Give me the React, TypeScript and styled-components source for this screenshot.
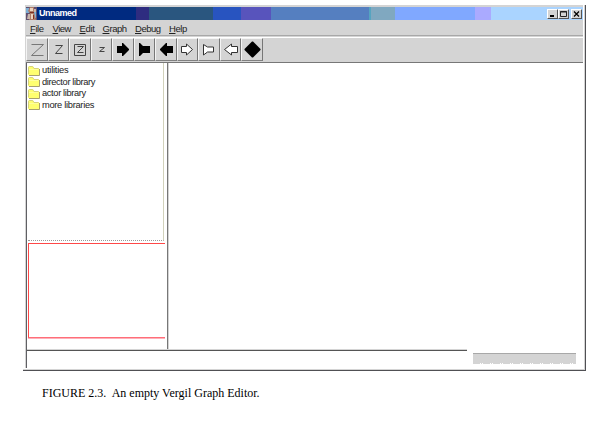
import React from "react";
import styled, { createGlobalStyle } from "styled-components";

const Global = createGlobalStyle`
  * { box-sizing: border-box; }
  body { margin: 0; background: #fff; color: #000; font-family: "Liberation Sans", Arial, sans-serif; }
`;

const Page = styled.div`
  width: 600px;
  height: 422px;
  padding: 5px 0 0 23px;
  overflow: hidden;
`;

const Window = styled.div`
  width: 563px;
  height: 366px;
  display: flex;
  flex-direction: column;
  padding-left: 2px;
  border-right: 1px solid #505054;
  border-bottom: 1px solid #505054;
  box-shadow: inset -1px -1px #d4d4d4;
`;

const Frame = styled.div`
  display: flex;
  flex-direction: column;
  width: 558px;
  height: 58px;
  background: #d4d4d4;
  padding: 1px 0 0 1px;
`;

const TitleBar = styled.header`
  display: flex;
  align-items: center;
  flex: none;
  height: 13px;
  margin-top: 1px;
  background: linear-gradient(
    90deg,
    #002a80 0 110px,
    #2e2c80 110px 123px,
    #2a567f 123px 187px,
    #2854c0 187px 215px,
    #5854bc 215px 245px,
    #557fc0 245px 343px,
    #55a4c0 343px 345px,
    #80a8c0 345px 369px,
    #80a8ff 369px 449px,
    #aaaaff 449px 465px,
    #aad4ff 465px
  );
`;

const Title = styled.h1`
  flex: 1;
  margin: 0 0 0 2px;
  color: #fff;
  font-size: 9px;
  line-height: 13px;
  letter-spacing: -0.5px;
`;

const WindowButtons = styled.div`
  display: flex;
  margin-right: 1px;
`;

const WindowButton = styled.span<{ $gap?: boolean }>`
  width: 11px;
  height: 10px;
  margin-left: ${(p) => (p.$gap ? 2 : 0)}px;
  background: #d4d4d4;
  border: 1px solid;
  border-color: #fff #555 #555 #fff;
  svg { display: block; }
`;

const MenuBar = styled.nav`
  display: flex;
  flex: none;
  height: 16px;
  padding-left: 4px;
  border-bottom: 1px solid #a8a8a8;
  font-size: 9.5px;
  line-height: 17px;
  color: #222;
`;

const MenuItem = styled.span<{ $width: number; $spacing: number }>`
  width: ${(p) => p.$width}px;
  letter-spacing: ${(p) => p.$spacing}px;
  white-space: nowrap;
  u { text-underline-offset: 1px; text-decoration-thickness: 1px; }
`;

const Toolbar = styled.div`
  display: flex;
  flex: none;
  height: 26px;
  margin-top: 1px;
  border-top: 1px solid #fff;
  border-bottom: 1px solid #777;
`;

const ToolButton = styled.span`
  display: flex;
  width: 21.55px;
  height: 23px;
  align-items: center;
  justify-content: center;
  border: 1px solid;
  border-color: #f4f4f4 #777 #808080 #f4f4f4;
`;

const Body = styled.main`
  display: flex;
  height: 287px;
`;

const Sidebar = styled.aside`
  width: 141px;
  padding-left: 1px;
  border-left: 1px solid #606064;
  margin-left: 1px;
  box-shadow: -1px 0 #d4d4d4;
`;

const Tree = styled.ul`
  width: 136px;
  height: 178px;
  margin: 0;
  padding: 2px 0 0;
  list-style: none;
  border-right: 1px solid #d2d2bc;
  border-bottom: 1px dotted #999;
`;

const TreeItem = styled.li<{ $spacing: number }>`
  display: flex;
  align-items: center;
  height: 11.5px;
  gap: 2px;
  font-size: 9.3px;
  line-height: 11px;
  letter-spacing: ${(p) => p.$spacing}px;
  white-space: nowrap;
  color: #222;
  svg { flex: none; }
`;

const Overview = styled.div`
  width: 137px;
  height: 95px;
  margin-top: 2px;
  border: 1px solid #ff4848;
  border-right: 0;
  border-bottom-color: #ff6e78;
  box-shadow: 0 1px #ffb0ba;
`;

const Canvas = styled.section`
  flex: 1;
  border-left: 1px solid #777;
  box-shadow: inset 1px 0 #d4d4d4;
  margin-right: 2px;
`;

const Status = styled.footer`
  display: flex;
  height: 18px;
  margin-left: 1px;
  border-left: 1px solid #606064;
  box-shadow: -1px 0 #d4d4d4;
`;

const Message = styled.div`
  width: 440px;
  height: 2px;
  border-top: 1px solid #555;
  box-shadow: 0 -1px #d4d4d4;
`;

const Progress = styled.div`
  width: 103px;
  height: 11px;
  margin: 3px 0 0 6px;
  background: repeating-linear-gradient(90deg, #d4d4d4 0 7px, #fff 7px 8px, #d4d4d4 8px 9px, #fff 9px 10px) 0 9px / 100% 1px no-repeat,
    linear-gradient(#d4d4d4 0 0) 0 0 / 100% 9px no-repeat;
  border-top: 1px solid #a8a8a8;
`;

const Caption = styled.p`
  margin: 14px 0 0 19px;
  font: 12px/16px "Liberation Serif", "Times New Roman", serif;
  white-space: pre;
`;

const menus: [string, number, number][] = [
  ["File", 22.5, -0.4],
  ["View", 27, -0.5],
  ["Edit", 23, -0.3],
  ["Graph", 32.5, -0.45],
  ["Debug", 34, -0.5],
  ["Help", 24, -0.4],
];

const libraries: [string, number][] = [
  ["utilities", -0.22],
  ["director library", -0.36],
  ["actor library", -0.36],
  ["more libraries", -0.3],
];

const RIGHT = "M4 6H9V3H10L16 9V10L10 16H9V13H4Z";
const FLAG = "M4 3H5L8 6H15V13H8L5 16H4Z";
const LEFT = "M16 6H10V3H9L3 9V10L9 16H10V13H16Z";

const Icon = ({ d, open = false }: { d: string; open?: boolean }) => (
  <svg width="19" height="19" viewBox="0 0 19 19">
    <path d={d} fill={open ? "#fff" : "#000"} stroke={open ? "#333" : "none"} />
  </svg>
);

const Zed = ({ w, h, color, framed = false }: { w: number; h: number; color: string; framed?: boolean }) => {
  const left = 10.5 - Math.ceil(w / 2);
  const top = 9.5 - Math.floor(h / 2);
  return (
    <svg width="19" height="19" viewBox="0 0 19 19" fill="none" stroke={color}>
      {framed && <path d="M4.5 4.5H15.5V15.5H4.5Z" stroke="#444" />}
      <path d={`M${left} ${top}h${w}l${-w} ${h}h${w}`} />
    </svg>
  );
};

const Folder = () => (
  <svg width="12" height="10" viewBox="0 0 12 10">
    <path d="M0 1L1 0H5L6 2H11V9H0Z" fill="#ffff70" />
    <path d="M0.5 8V1.5L1.5 0.5H4.5L6 2.5H10.5" fill="none" stroke="#d4d080" />
    <path d="M1 9.5H11.5V3" fill="none" stroke="#a8a070" />
    <path d="M1 3.5H10" stroke="#ffff9c" />
  </svg>
);

const AppIcon = () => (
  <svg width="11" height="13" viewBox="0 0 11 13">
    <path d="M0 0H11V13H0Z" fill="#605070" />
    <path d="M0 1H3V6H0ZM8 5H10V11H8Z" fill="#7dafd6" />
    <path d="M4 0H8V5L10 13H3L4 6L2 4Z" fill="#ad7c68" />
    <path d="M4 1H7V4H4ZM5 7H7V12H5Z" fill="#edd2bd" />
    <path d="M2 7H4V12H1ZM8 2H10V5H8Z" fill="#c8b5ac" />
    <path d="M4 5H8V6H4ZM7 8H8V12H7Z" fill="#803020" />
  </svg>
);

export default function App() {
  return (
    <Page>
      <Global />
      <Window>
        <Frame>
          <TitleBar>
            <AppIcon />
            <Title>Unnamed</Title>
            <WindowButtons>
              <WindowButton><svg width="9" height="8"><path d="M2 6H6" stroke="#000" strokeWidth="2" /></svg></WindowButton>
              <WindowButton><svg width="9" height="8"><path d="M1.5 1.5H7.5V6.5H1.5ZM1 2H8" fill="none" stroke="#222" /></svg></WindowButton>
              <WindowButton $gap><svg width="9" height="8"><path d="M2 1.5L7 6.5M7 1.5L2 6.5" stroke="#000" strokeWidth="1.2" /></svg></WindowButton>
            </WindowButtons>
          </TitleBar>
          <MenuBar>
            {menus.map(([name, width, spacing]) => (
              <MenuItem key={name} $width={width} $spacing={spacing}>
                <u>{name[0]}</u>{name.slice(1)}
              </MenuItem>
            ))}
          </MenuBar>
          <Toolbar>
            <ToolButton><Zed w={12} h={11} color="#777" /></ToolButton>
            <ToolButton><Zed w={7} h={8} color="#444" /></ToolButton>
            <ToolButton><Zed w={6} h={6} color="#444" framed /></ToolButton>
            <ToolButton><Zed w={5} h={4} color="#444" /></ToolButton>
            <ToolButton><Icon d={RIGHT} /></ToolButton>
            <ToolButton><Icon d={FLAG} /></ToolButton>
            <ToolButton><Icon d={LEFT} /></ToolButton>
            <ToolButton><Icon d="M3.5 6.5H8.5V4L14.5 9.5L8.5 15V12.5H3.5Z" open /></ToolButton>
            <ToolButton><Icon d="M3.5 4.5L7.5 7H13.5V12H7.5L3.5 15Z" open /></ToolButton>
            <ToolButton><Icon d="M16.5 6.5H10.5V4L3.5 9.5L10.5 15V12.5H16.5Z" open /></ToolButton>
            <ToolButton><Icon d="M9 1.5H10L17.5 9V10L10 17.5H9L1.5 10V9Z" /></ToolButton>
          </Toolbar>
        </Frame>
        <Body>
          <Sidebar>
            <Tree>
              {libraries.map(([name, spacing]) => (
                <TreeItem key={name} $spacing={spacing}><Folder />{name}</TreeItem>
              ))}
            </Tree>
            <Overview />
          </Sidebar>
          <Canvas />
        </Body>
        <Status>
          <Message />
          <Progress />
        </Status>
      </Window>
      <Caption>FIGURE 2.3.  An empty Vergil Graph Editor.</Caption>
    </Page>
  );
}
